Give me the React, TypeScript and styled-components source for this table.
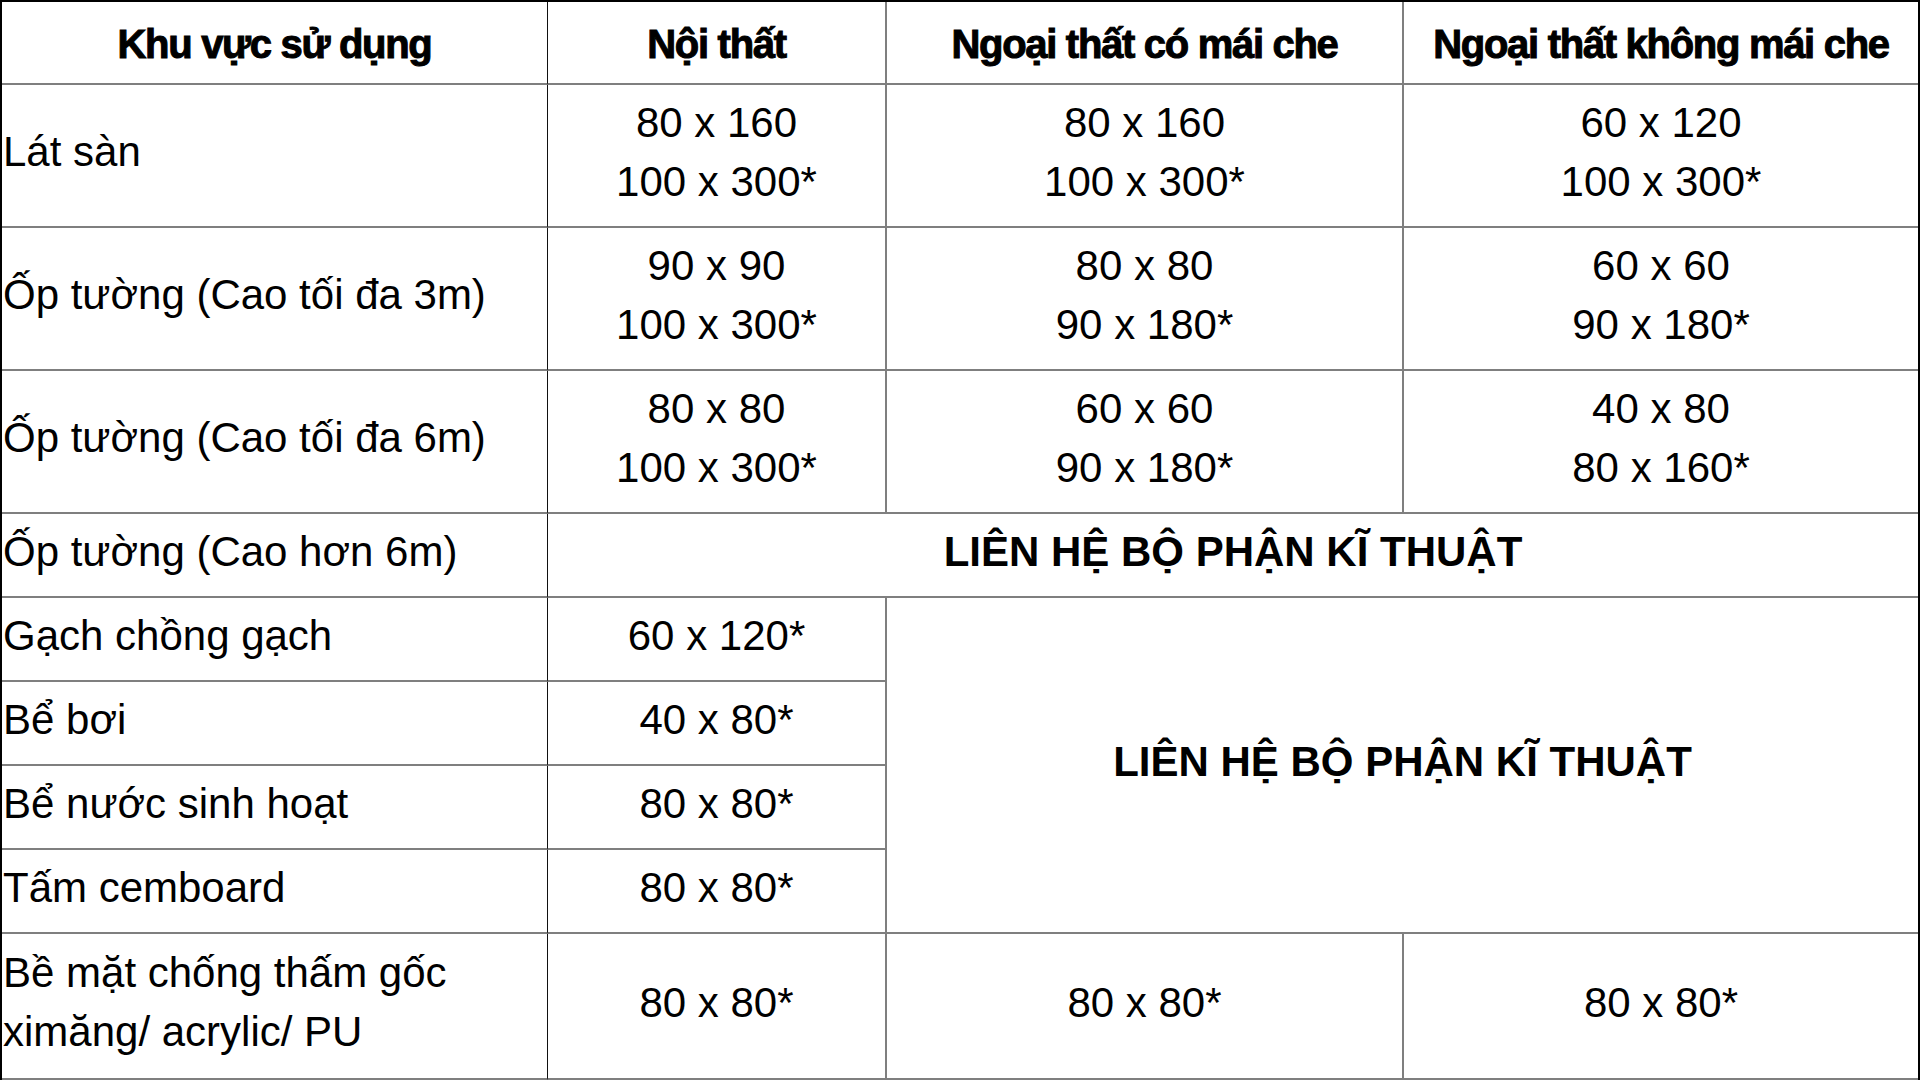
import React from "react";
import styled, { createGlobalStyle } from "styled-components";

const GlobalStyle = createGlobalStyle`
  html, body {
    margin: 0;
    padding: 0;
    background: #ffffff;
  }
  * {
    box-sizing: border-box;
  }
`;

const Table = styled.div`
  display: grid;
  grid-template-columns: 546px 339px 517px 1fr;
  grid-template-rows: 83px 143px 143px 143px 84px 84px 84px 84px 84px 1fr;
  width: 1920px;
  height: 1080px;
  border-top: 2px solid #000;
  border-left: 2px solid #000;
  border-right: 2px solid #000;
  background: #fff;
  color: #000;
  font-family: "Liberation Sans", Arial, sans-serif;
`;

const Cell = styled.div<{ $first?: boolean; $last?: boolean; $span?: string; $rows?: string }>`
  display: flex;
  flex-direction: column;
  justify-content: center;
  align-items: ${(p) => (p.$first ? "flex-start" : "center")};
  text-align: ${(p) => (p.$first ? "left" : "center")};
  padding: 0 0 8px ${(p) => (p.$first ? "1px" : "0")};
  border-bottom: 2px solid #7f7f7f;
  border-right: ${(p) =>
    p.$last ? "none" : p.$first ? "1px solid #111" : "2px solid #7f7f7f"};
  font-size: 42px;
  line-height: 59px;
  grid-column: ${(p) => p.$span ?? "auto"};
  grid-row: ${(p) => p.$rows ?? "auto"};
`;

const HeadCell = styled(Cell)`
  align-items: center;
  text-align: center;
  padding: 4px 0 0 0;
  font-weight: 700;
  font-size: 40px;
  letter-spacing: -1.3px;
  -webkit-text-stroke: 1px #000;
`;

const Notice = styled.span`
  font-weight: 700;
  font-size: 42px;
`;

const Line = styled.span`
  display: block;
  white-space: nowrap;
`;

const sizeRows: { area: string; sizes: string[][] }[] = [
  {
    area: "Lát sàn",
    sizes: [
      ["80 x 160", "100 x 300*"],
      ["80 x 160", "100 x 300*"],
      ["60 x 120", "100 x 300*"],
    ],
  },
  {
    area: "Ốp tường (Cao tối đa 3m)",
    sizes: [
      ["90 x 90", "100 x 300*"],
      ["80 x 80", "90 x 180*"],
      ["60 x 60", "90 x 180*"],
    ],
  },
  {
    area: "Ốp tường (Cao tối đa 6m)",
    sizes: [
      ["80 x 80", "100 x 300*"],
      ["60 x 60", "90 x 180*"],
      ["40 x 80", "80 x 160*"],
    ],
  },
];

const interiorOnly = [
  { area: "Gạch chồng gạch", size: "60 x 120*" },
  { area: "Bể bơi", size: "40 x 80*" },
  { area: "Bể nước sinh hoạt", size: "80 x 80*" },
  { area: "Tấm cemboard", size: "80 x 80*" },
];

const CONTACT = "LIÊN HỆ BỘ PHẬN KĨ THUẬT";

export default function App() {
  return (
    <>
      <GlobalStyle />
      <Table>
        <HeadCell $first>Khu vực sử dụng</HeadCell>
        <HeadCell>Nội thất</HeadCell>
        <HeadCell>Ngoại thất có mái che</HeadCell>
        <HeadCell $last>Ngoại thất không mái che</HeadCell>

        {sizeRows.map((row) => (
          <React.Fragment key={row.area}>
            <Cell $first>
              <Line>{row.area}</Line>
            </Cell>
            {row.sizes.map((s, i) => (
              <Cell key={i} $last={i === 2}>
                {s.map((t) => (
                  <Line key={t}>{t}</Line>
                ))}
              </Cell>
            ))}
          </React.Fragment>
        ))}

        <Cell $first $rows="5">
          <Line>Ốp tường (Cao hơn 6m)</Line>
        </Cell>
        <Cell $span="2 / 5" $rows="5" $last>
          <Notice>{CONTACT}</Notice>
        </Cell>

        {interiorOnly.map((row, i) => (
          <React.Fragment key={row.area}>
            <Cell $first $rows={`${6 + i}`}>
              <Line>{row.area}</Line>
            </Cell>
            <Cell $span="2" $rows={`${6 + i}`}>
              <Line>{row.size}</Line>
            </Cell>
          </React.Fragment>
        ))}
        <Cell $span="3 / 5" $rows="6 / 10" $last>
          <Notice>{CONTACT}</Notice>
        </Cell>

        <Cell $first $rows="10">
          <Line>Bề mặt chống thấm gốc</Line>
          <Line>ximăng/ acrylic/ PU</Line>
        </Cell>
        <Cell $rows="10">
          <Line>80 x 80*</Line>
        </Cell>
        <Cell $rows="10">
          <Line>80 x 80*</Line>
        </Cell>
        <Cell $rows="10" $last>
          <Line>80 x 80*</Line>
        </Cell>
      </Table>
    </>
  );
}
